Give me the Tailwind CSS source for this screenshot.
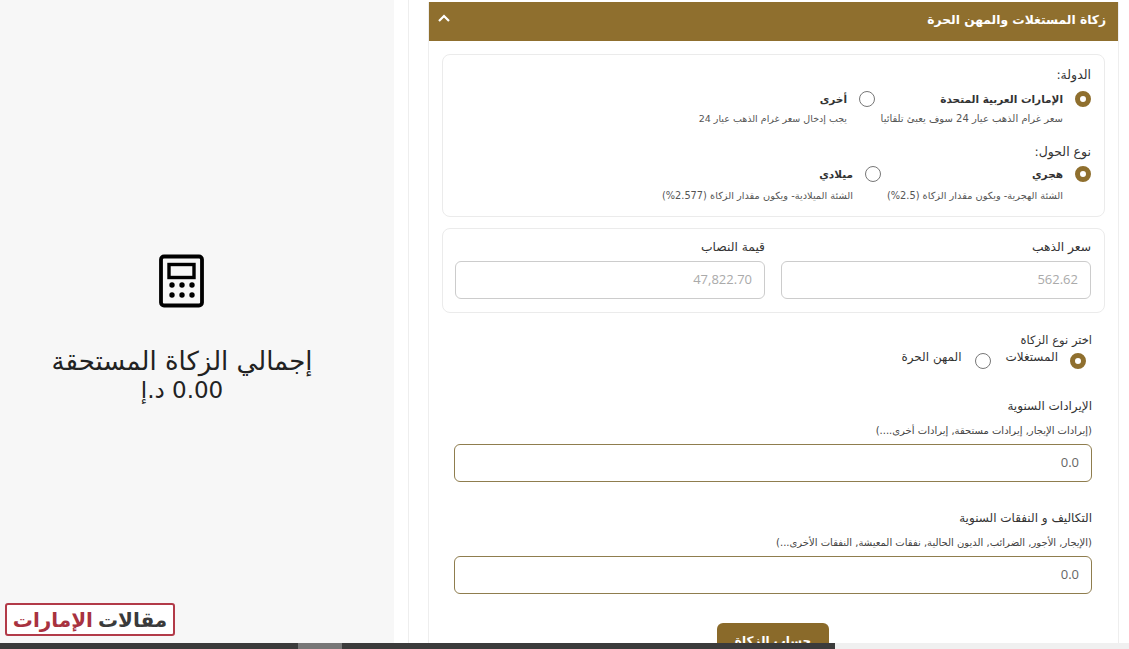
<!DOCTYPE html>
<html lang="ar">
<head>
  <meta charset="UTF-8" />
  <title>زكاة المستغلات والمهن الحرة</title>
  <script src="https://cdn.jsdelivr.net/npm/@tailwindcss/browser@4"></script>
</head>
<body class="bg-white font-['DejaVu_Sans',sans-serif]">
  <div class="relative flex h-[649px] w-[1129px] overflow-hidden bg-white">

    <!-- Total panel -->
    <aside class="flex h-full w-[394px] shrink-0 flex-col items-center bg-[#f7f7f7] pt-[254px] pr-[30px] text-[#222]">
      <svg class="ml-[-1px]" width="46" height="54" viewBox="0 0 46 54">
        <rect x="2" y="2.5" width="41" height="49" rx="3" fill="none" stroke="#000" stroke-width="3.8" />
        <rect x="10" y="10.5" width="25" height="13" fill="none" stroke="#000" stroke-width="3.4" />
        <circle cx="13" cy="31" r="2.7" />
        <circle cx="23" cy="31" r="2.7" />
        <circle cx="33" cy="31" r="2.7" />
        <circle cx="13" cy="41" r="2.7" />
        <circle cx="23" cy="41" r="2.7" />
        <circle cx="33" cy="41" r="2.7" />
      </svg>
      <p dir="rtl" class="mt-[39px] whitespace-nowrap text-center text-[26px] leading-[29px]">إجمالي الزكاة المستحقة</p>
      <p dir="rtl" class="whitespace-nowrap text-center text-[23px] leading-[29px]">0.00 د.إ</p>
    </aside>

    <!-- Form column -->
    <main class="ml-[14px] flex-1 border-l border-[#eee] pl-[19px]">
      <section dir="rtl" class="mt-[2px] h-[660px] w-[691px] border-x border-[#eee]">
        <header class="flex h-[39px] items-center justify-between bg-[#8f6f2e] pr-[12px] pl-[8px] pb-[3px] text-white">
          <h2 class="text-[12.3px] font-bold">زكاة المستغلات والمهن الحرة</h2>
          <svg width="14" height="14" viewBox="0 0 14 14" fill="none" stroke="#fff" stroke-width="2.2" class="mb-[4px]"><path d="M2 10l5-5 5 5" /></svg>
        </header>

        <div class="px-[13px] pt-[13px]">
          <!-- Country and year type -->
          <div class="h-[163px] rounded-lg border border-[#ebebeb] pt-[12px] pr-[13px] text-[#333]">
            <p class="text-[12.5px] leading-[16px]">الدولة:</p>
            <div class="mt-[8px] flex">
              <label class="w-[216px]">
                <span class="flex items-center gap-[12px] text-[10.5px] font-bold leading-[16px]">
                  <span class="h-[16px] w-[16px] rounded-full border-[5px] border-[#8f6f2e] bg-white"></span>
                  الإمارات العربية المتحدة
                </span>
                <span class="mr-[28px] mt-[5px] block whitespace-nowrap text-[10px] leading-[13px] text-[#555]">سعر غرام الذهب عيار 24 سوف يعبئ تلقائيا</span>
              </label>
              <label>
                <span class="flex items-center gap-[12px] text-[10.5px] font-bold leading-[16px]">
                  <span class="h-[16px] w-[16px] rounded-full border border-[#777] bg-white"></span>
                  أخرى
                </span>
                <span class="mr-[28px] mt-[5px] block whitespace-nowrap text-[9.5px] leading-[13px] text-[#555]">يجب إدخال سعر غرام الذهب عيار 24</span>
              </label>
            </div>
            <p class="mt-[19px] text-[12.5px] leading-[16px]">نوع الحول:</p>
            <div class="mt-[6px] flex">
              <label class="w-[210px]">
                <span class="flex items-center gap-[12px] text-[10.5px] font-bold leading-[16px]">
                  <span class="h-[16px] w-[16px] rounded-full border-[5px] border-[#8f6f2e] bg-white"></span>
                  هجري
                </span>
                <span class="mr-[28px] mt-[7px] block whitespace-nowrap text-[9.8px] leading-[13px] text-[#555]">الشئة الهجرية- ويكون مقدار الزكاة (2.5%)</span>
              </label>
              <label>
                <span class="flex items-center gap-[12px] text-[10.5px] font-bold leading-[16px]">
                  <span class="h-[16px] w-[16px] rounded-full border border-[#777] bg-white"></span>
                  ميلادي
                </span>
                <span class="mr-[28px] mt-[7px] block whitespace-nowrap text-[9.8px] leading-[13px] text-[#555]">الشئة الميلادية- ويكون مقدار الزكاة (2.577%)</span>
              </label>
            </div>
          </div>

          <!-- Gold price and nisab -->
          <div class="mt-[11px] flex h-[85px] gap-[16px] rounded-lg border border-[#ebebeb] pr-[13px] pl-[12px] pt-[10px]">
            <div class="w-[310px]">
              <p class="text-[12.3px] leading-[17px] text-[#333]">سعر الذهب</p>
              <div class="mt-[5px] flex h-[38px] items-center rounded-md border border-[#ccc] px-[12px] font-['Open_Sans',sans-serif] text-[13px] text-[#aaa]">562.62</div>
            </div>
            <div class="w-[310px]">
              <p class="text-[12.3px] leading-[17px] text-[#333]">قيمة النصاب</p>
              <div class="mt-[5px] flex h-[38px] items-center rounded-md border border-[#ccc] px-[12px] font-['Open_Sans',sans-serif] text-[13px] text-[#aaa]">47,822.70</div>
            </div>
          </div>

          <!-- Zakat type -->
          <div class="pr-[13px] pl-[12px]">
            <p class="mt-[19px] text-[11.5px] leading-[16px] text-[#333]">اختر نوع الزكاة</p>
            <div class="mt-[2px] flex items-start text-[12px] leading-[14px] text-[#333]">
              <span class="mr-[6px] mt-[3px] h-[16px] w-[16px] rounded-full border-[5px] border-[#8f6f2e] bg-white"></span>
              <span class="mr-[12px]">المستغلات</span>
              <span class="mr-[15px] mt-[3px] h-[16px] w-[16px] rounded-full border border-[#777] bg-white"></span>
              <span class="mr-[13px]">المهن الحرة</span>
            </div>

            <p class="mt-[29px] text-[12px] leading-[16px] text-[#333]">الإيرادات السنوية</p>
            <p class="mt-[10px] text-[10px] leading-[13px] text-[#444]">(إيرادات الإيجار, إيرادات مستحقة, إيرادات أخرى....)</p>
            <div class="mt-[7px] flex h-[38px] items-center rounded-md border border-[#8f7d4e] px-[12px] font-['Open_Sans',sans-serif] text-[13px] text-[#666]">0.0</div>

            <p class="mt-[28px] text-[12px] leading-[16px] text-[#333]">التكاليف و النفقات السنوية</p>
            <p class="mt-[10px] text-[10px] leading-[13px] text-[#444]">(الإيجار, الأجور, الضرائب, الديون الحالية, نفقات المعيشة, النفقات الأخرى...)</p>
            <div class="mt-[7px] flex h-[38px] items-center rounded-md border border-[#8f7d4e] px-[12px] font-['Open_Sans',sans-serif] text-[13px] text-[#666]">0.0</div>

            <div class="mt-[29px] flex justify-center">
              <button class="h-[40px] w-[112px] rounded-md bg-[#8a6a2a] pb-[5px] text-[12px] font-bold text-white">حساب الزكاة</button>
            </div>
          </div>
        </div>
      </section>
    </main>

    <!-- Watermark logo -->
    <div dir="rtl" class="absolute bottom-[13px] left-[5px] flex h-[33px] w-[170px] items-center justify-center gap-[5px] rounded-[3px] border-2 border-[#b23a48] bg-white text-[20px] font-bold leading-none">
      <span class="text-[#3a3a3a]">مقالات</span>
      <span class="text-[#a8323f]">الإمارات</span>
    </div>

    <!-- Browser scrollbar strip -->
    <div class="absolute right-0 bottom-0 left-0 flex h-[6px] bg-[#f0f0f0]">
      <div class="flex h-full w-[835px] bg-[#3b3b3b]">
        <div class="ml-[298px] h-full w-[44px] bg-[#777]"></div>
      </div>
    </div>
  </div>
</body>
</html>
